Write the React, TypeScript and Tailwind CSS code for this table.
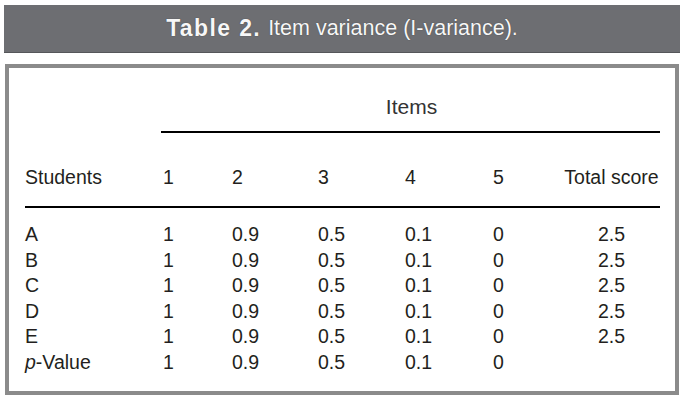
const rows = [
  { label: "A", values: ["1", "0.9", "0.5", "0.1", "0"], total: "2.5" },
  { label: "B", values: ["1", "0.9", "0.5", "0.1", "0"], total: "2.5" },
  { label: "C", values: ["1", "0.9", "0.5", "0.1", "0"], total: "2.5" },
  { label: "D", values: ["1", "0.9", "0.5", "0.1", "0"], total: "2.5" },
  { label: "E", values: ["1", "0.9", "0.5", "0.1", "0"], total: "2.5" },
];

const grid =
  "grid grid-cols-[138px_69px_86px_87px_88px_70px_1fr] items-center";

export default function App() {
  return (
    <div className="w-[683px] h-[400px] bg-white pt-[5px] font-['Liberation_Sans',Arial,sans-serif] text-[#231f20]">
      {/* caption bar */}
      <div className="ml-[4px] mr-[3px] h-[48px] bg-[#6d6e72] border-b border-[#55565a] flex items-center justify-center text-[#f7f7f7] [text-shadow:0_0_1px_rgba(0,0,0,0.5)]">
        <span className="text-[23px] font-bold tracking-[0.06em] mr-[7px]">
          Table 2.
        </span>
        <span className="text-[21.5px]">Item variance (I-variance).</span>
      </div>

      {/* table box */}
      <div className="mt-[11px] ml-[5px] mr-[4px] h-[331px] border-4 border-[#8b8b8b] pl-[16px] pr-[15px] pt-[27px] text-[19.5px]">
        <div className={grid}>
          <div className="col-start-2 col-span-6 text-center leading-[24px] text-[21px] text-[#333]">
            Items
          </div>
        </div>
        <div className="ml-[136px] mt-[12px] h-[2px] bg-black" />

        <div className={`${grid} mt-[32px] leading-[24px]`}>
          <div>Students</div>
          <div>1</div>
          <div>2</div>
          <div>3</div>
          <div>4</div>
          <div>5</div>
          <div className="text-center">Total score</div>
        </div>
        <div className="mt-[17px] h-[2px] bg-black" />

        <div className="mt-[14px]">
          {rows.map((r) => (
            <div key={r.label} className={`${grid} h-[25.6px] leading-[25.6px]`}>
              <div>{r.label}</div>
              {r.values.map((v, i) => (
                <div key={i}>{v}</div>
              ))}
              <div className="text-center">{r.total}</div>
            </div>
          ))}
          <div className={`${grid} h-[25.6px] leading-[25.6px]`}>
            <div>
              <span className="italic">p</span>-Value
            </div>
            <div>1</div>
            <div>0.9</div>
            <div>0.5</div>
            <div>0.1</div>
            <div>0</div>
            <div />
          </div>
        </div>
      </div>
    </div>
  );
}
